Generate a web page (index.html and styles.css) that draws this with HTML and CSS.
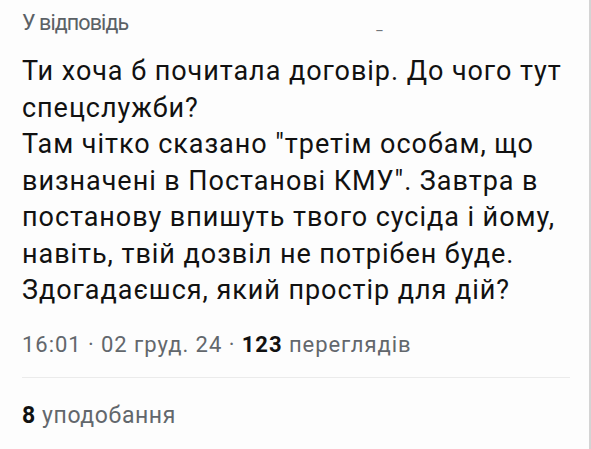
FILE: index.html
```html
<!DOCTYPE html>
<html lang="uk">
<head>
<meta charset="utf-8">
<link rel="stylesheet" href="styles.css">
</head>
<body>
<div class="card">
  <div class="reply">У відповідь <span class="blur"></span><span class="dash">_</span></div>
  <div class="text">Ти хоча б почитала договір. До чого тут спецслужби?<br>Там чітко сказано "третім особам, що визначені в Постанові КМУ". Завтра в постанову впишуть твого сусіда і йому, навіть, твій дозвіл не потрібен буде. Здогадаєшся, який простір для дій?</div>
  <div class="meta">16:01 · 02 груд. 24 · <b>123</b> переглядів</div>
  <div class="divider"></div>
  <div class="likes"><b>8</b> уподобання</div>
</div>
</body>
</html>
```
FILE: styles.css
```css
html, body {
  margin: 0;
  padding: 0;
  background: #fff;
}
body {
  font-family: Roboto, "Liberation Sans", sans-serif;
  width: 591px;
  height: 449px;
  overflow: hidden;
}
.card {
  box-sizing: border-box;
  width: 591px;
  height: 449px;
  border-right: 2px solid #d4d4d4;
  background: #fdfdfd;
  padding: 9px 0 0 22px;
}
.reply {
  font-size: 21.5px;
  letter-spacing: -0.9px;
  color: #5b6166;
  line-height: 28px;
  height: 28px;
  display: flex;
  align-items: baseline;
}
.blur {
  display: inline-block;
  width: 120px;
}
.dash {
  margin-left: 128px;
  font-size: 14px;
  color: #70757a;
}
.text {
  margin-top: 16px;
  width: 565px;
  font-size: 27px;
  letter-spacing: 0.95px;
  line-height: 36.5px;
  color: #111;
}
.meta {
  margin-top: 21px;
  font-size: 22px;
  letter-spacing: 0.95px;
  line-height: 30px;
  color: #62676c;
}
.meta b {
  color: #111;
  font-weight: 700;
}
.divider {
  margin-top: 17px;
  width: 548px;
  height: 1px;
  background: #ebebeb;
}
.likes {
  margin-top: 23px;
  font-size: 23px;
  letter-spacing: 0.6px;
  line-height: 30px;
  color: #62676c;
}
.likes b {
  color: #111;
}
```
